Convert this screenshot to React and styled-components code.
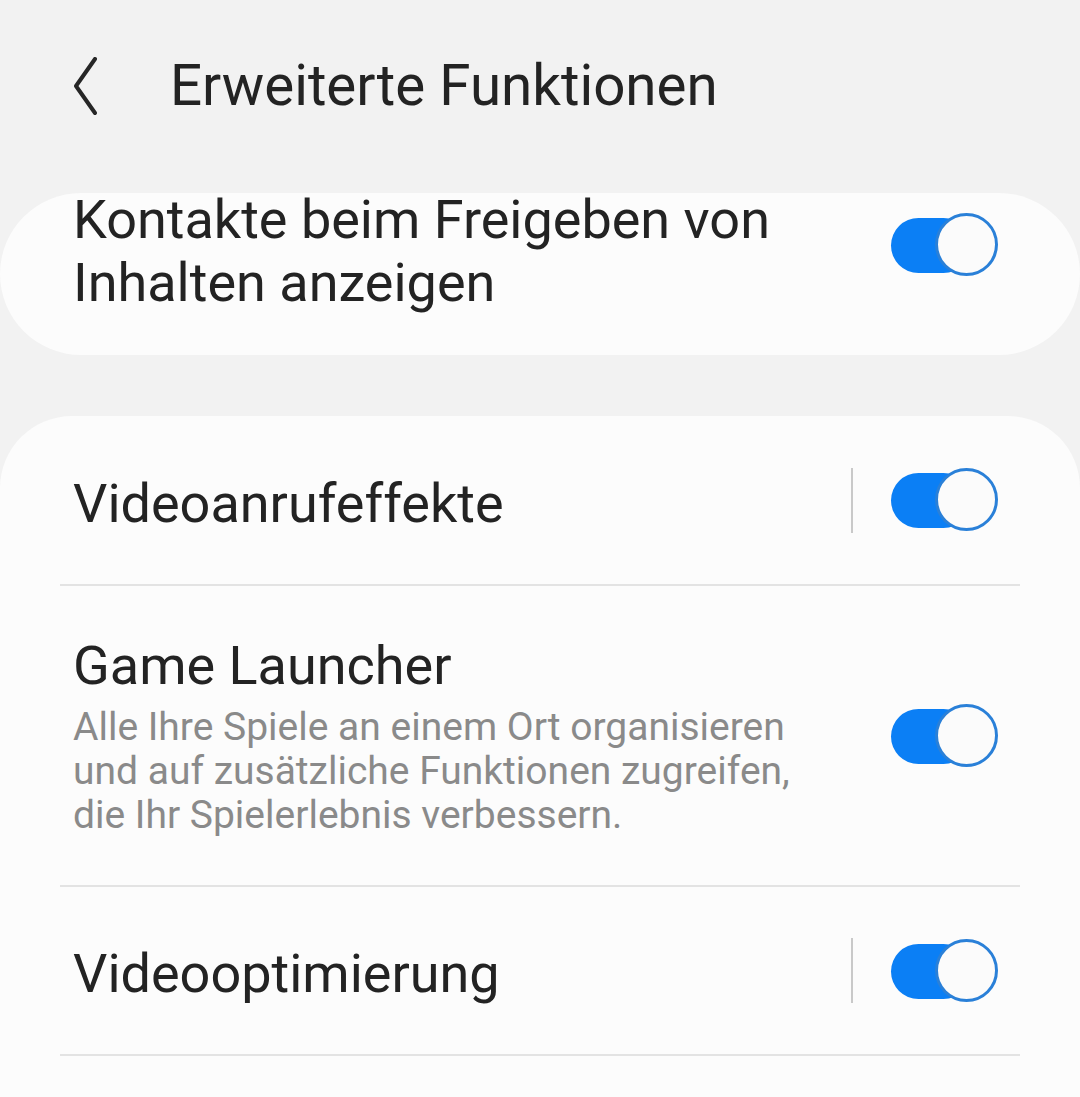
import React from "react";
import styled, { createGlobalStyle } from "styled-components";

const GlobalStyle = createGlobalStyle`
html, body {
  margin: 0;
  padding: 0;
  background: #f2f2f2;
}
body {
  font-family: Roboto, "Liberation Sans", sans-serif;
  color: #232323;
}
`;

const Page = styled.div`
width: 1080px;
height: 1097px;
overflow: hidden;
background: #f2f2f2;
display: flex;
flex-direction: column;
`;

const Header = styled.header`
height: 172px;
display: flex;
align-items: center;
padding-left: 74px;
gap: 72px;
flex-shrink: 0;
`;

const BackButton = styled.button`
border: none;
background: none;
padding: 0;
width: 24px;
height: 58px;
display: flex;
color: #262626;
`;

const Title = styled.h1`
margin: 0;
font-size: 56.5px;
font-weight: 400;
line-height: 64px;
color: #232323;
`;

const Card = styled.section`
background: #fcfcfc;
border-radius: ${(p) => p.$radius}px;
margin-top: ${(p) => p.$gap}px;
display: flex;
flex-direction: column;
flex-shrink: 0;
`;

const TopCard = styled(Card)`
height: 162px;
`;

const ListCard = styled(Card)`
min-height: 820px;
`;

const Row = styled.div`
display: flex;
align-items: ${(p) => p.$align || "center"};
min-height: ${(p) => p.$height || 0}px;
padding: 0 82px 0 73px;
`;

const TextBlock = styled.div`
flex: 1;
display: flex;
flex-direction: column;
margin-top: ${(p) => p.$shift || 0}px;
`;

const Label = styled.div`
font-size: 54px;
line-height: 63px;
color: #232323;
white-space: nowrap;
`;

const Description = styled.div`
font-size: 39px;
line-height: 44px;
color: #8a8a8a;
margin-top: 8px;
max-width: 745px;
`;

const VDivider = styled.div`
width: 2px;
height: 65px;
background: #c9c9c9;
margin-right: 38px;
`;

const Separator = styled.div`
height: 2px;
margin: 0 60px;
background: #e3e3e3;
`;

const Toggle = styled.span`
position: relative;
display: block;
width: 107px;
height: 64px;
flex-shrink: 0;
margin-top: ${(p) => p.$top || 0}px;
&::before {
  content: "";
  position: absolute;
  left: 0;
  top: 5px;
  width: 80px;
  height: 55px;
  border-radius: 28px;
  background: #0b7ff5;
}
&::after {
  content: "";
  position: absolute;
  right: 0;
  top: 0;
  width: 57px;
  height: 57px;
  border-radius: 50%;
  border: 3.5px solid #2a80d8;
  background: #fbfbfb;
}
`;

const rows = [
  { label: "Videoanrufeffekte", divider: true, height: 168 },
  {
    label: "Game Launcher",
    description:
      "Alle Ihre Spiele an einem Ort organisieren und auf zusätzliche Funktionen zugreifen, die Ihr Spielerlebnis verbessern.",
    height: 299,
  },
  { label: "Videooptimierung", divider: true, height: 167 },
];

const ChevronLeft = () => (
  <svg width="24" height="58" viewBox="0 0 24 58" fill="none">
    <polyline
      points="21,2 2,29 21,56"
      stroke="currentColor"
      strokeWidth="4"
      strokeLinecap="round"
      strokeLinejoin="round"
    />
  </svg>
);

const App = () => {
  return (
    <Page>
      <GlobalStyle />
      <Header>
        <BackButton aria-label="Zurück">
          <ChevronLeft />
        </BackButton>
        <Title>Erweiterte Funktionen</Title>
      </Header>

      <TopCard $radius={81} $gap={21}>
        <Row $align="flex-start">
          <TextBlock $shift={-5}>
            <Label>Kontakte beim Freigeben von</Label>
            <Label>Inhalten anzeigen</Label>
          </TextBlock>
          <Toggle $top={20} />
        </Row>
      </TopCard>

      <ListCard $radius={72} $gap={61}>
        {rows.map((row) => (
          <React.Fragment key={row.label}>
            <Row $height={row.height}>
              <TextBlock $shift={row.description ? 0 : 6}>
                <Label>{row.label}</Label>
                {row.description && <Description>{row.description}</Description>}
              </TextBlock>
              {row.divider && <VDivider />}
              <Toggle />
            </Row>
            <Separator />
          </React.Fragment>
        ))}
      </ListCard>
    </Page>
  );
};

export default App;
